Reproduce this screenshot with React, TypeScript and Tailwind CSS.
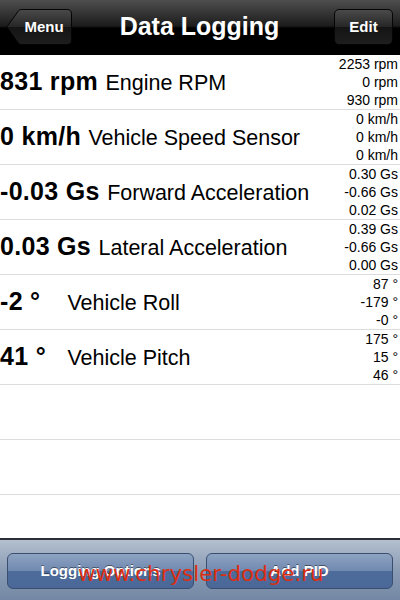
import React from 'react';

// Rows of the logging table: current value, label, then max / min / avg
const rows = [
  { value: '831 rpm', label: 'Engine RPM', stats: ['2253 rpm', '0 rpm', '930 rpm'] },
  { value: '0 km/h', label: 'Vehicle Speed Sensor', stats: ['0 km/h', '0 km/h', '0 km/h'] },
  { value: '-0.03 Gs', label: 'Forward Acceleration', stats: ['0.30 Gs', '-0.66 Gs', '0.02 Gs'] },
  { value: '0.03 Gs', label: 'Lateral Acceleration', stats: ['0.39 Gs', '-0.66 Gs', '0.00 Gs'] },
  { value: '-2 °', label: 'Vehicle Roll', stats: ['87 °', '-179 °', '-0 °'] },
  { value: '41 °', label: 'Vehicle Pitch', stats: ['175 °', '15 °', '46 °'] },
];

const BackButton = ({ label }: { label: string }) => (
  <button className="relative h-[36px] w-[66px]">
    <svg className="absolute inset-0" width="66" height="36" viewBox="0 0 66 36">
      <defs>
        <linearGradient id="navbtn" x1="0" y1="0" x2="0" y2="1">
          <stop offset="0" stopColor="#4a4a4a" />
          <stop offset="0.5" stopColor="#262626" />
          <stop offset="0.5" stopColor="#141414" />
          <stop offset="1" stopColor="#1e1e1e" />
        </linearGradient>
      </defs>
      <path
        d="M0.8 18 L12.5 1.8 Q13.5 0.5 15.5 0.5 H61 Q65.5 0.5 65.5 5 V31 Q65.5 35.5 61 35.5 H15.5 Q13.5 35.5 12.5 34.2 Z"
        fill="url(#navbtn)"
        stroke="#050505"
      />
    </svg>
    <span className="relative flex h-full items-center justify-center pl-[10px] text-[15px] font-bold text-white">
      {label}
    </span>
  </button>
);

const NavButton = ({ label }: { label: string }) => (
  <button className="flex h-[36px] w-[59px] items-center justify-center rounded-[5px] border border-[#050505] bg-[linear-gradient(to_bottom,#4a4a4a_0%,#262626_50%,#141414_50%,#1e1e1e_100%)] text-[15px] font-bold text-white">
    {label}
  </button>
);

const ToolbarButton = ({ label }: { label: string }) => (
  <button className="flex h-[36px] w-[187px] items-center justify-center rounded-[6px] border border-[#3a4f70] bg-[linear-gradient(to_bottom,#8ea3c2_0%,#7089b0_50%,#4d6c9c_50%,#4a6797_100%)] text-[15px] font-bold text-white [text-shadow:0_-1px_0_rgba(0,0,0,0.45)]">
    {label}
  </button>
);

const App = () => {
  return (
    <div className="relative flex h-[600px] w-[400px] flex-col overflow-hidden bg-white font-['Liberation_Sans',Arial,sans-serif] text-black">
      {/* Navigation bar */}
      <div className="grid h-[55px] shrink-0 grid-cols-[1fr_auto_1fr] items-center border-b border-black bg-[linear-gradient(to_bottom,#4e4e4e_0%,#1c1c1c_48%,#000_52%,#000_100%)] pl-[6px] pr-[7px]">
        <div className="flex justify-start">
          <BackButton label="Menu" />
        </div>
        <h1 className="text-[25px] font-bold text-white">Data Logging</h1>
        <div className="flex justify-end">
          <NavButton label="Edit" />
        </div>
      </div>

      {/* Data table */}
      <div className="flex-1">
        {rows.map((row) => (
          <div
            key={row.label}
            className="flex h-[55px] items-center justify-between border-b border-[#dcdcdc] pr-[2px]"
          >
            <div className="whitespace-nowrap">
              <span className="inline-block min-w-[60px] text-[25px] font-bold tracking-[0.3px]">{row.value}</span>{' '}
              <span className="ml-[3px] text-[21.5px]">{row.label}</span>
            </div>
            <div className="flex flex-col items-end text-[14px] leading-[18px]">
              {row.stats.map((s, i) => (
                <span key={i}>{s}</span>
              ))}
            </div>
          </div>
        ))}
        <div className="h-[55px] border-b border-[#dcdcdc]" />
        <div className="h-[55px] border-b border-[#dcdcdc]" />
      </div>

      {/* Bottom toolbar */}
      <div className="flex h-[62px] shrink-0 items-center justify-between border-t-2 border-[#2b2e34] bg-[linear-gradient(to_bottom,#b4c0cf_0%,#8a9bb4_50%,#7388a5_100%)] px-[7px] pt-[2px]">
        <ToolbarButton label="Logging Options" />
        <ToolbarButton label="Add PID" />
      </div>

      {/* Watermark over the toolbar */}
      <span className="pointer-events-none absolute left-[78px] top-[558px] font-['DejaVu_Sans',sans-serif] text-[21.4px] text-[#dc2e12]">
        www.chrysler-dodge.ru
      </span>
    </div>
  );
};

export default App;
